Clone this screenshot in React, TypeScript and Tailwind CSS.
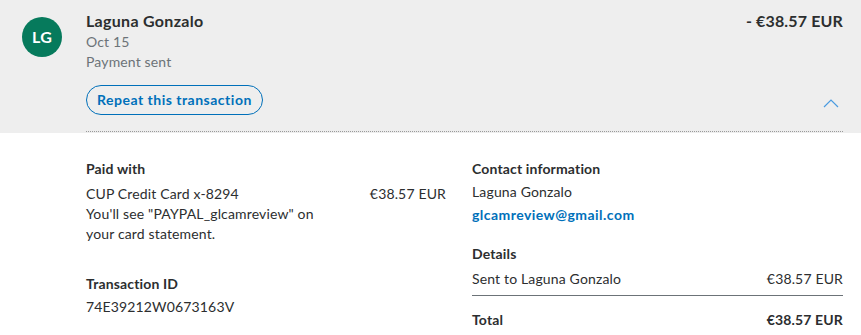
export default function App() {
  return (
    <div className="w-[861px] h-[335px] overflow-hidden bg-white text-[#2c2e2f] font-['Lato',_'Liberation_Sans',_sans-serif] tracking-[0.15px]">
      {/* Header */}
      <div className="flex bg-[#eeeeee] pb-[1px]">
        <div className="ml-[22px] mt-[17px] flex h-[40px] w-[40px] shrink-0 items-center justify-center rounded-full bg-[#067a5c] text-[16px] font-bold text-white">
          LG
        </div>
        <div className="ml-[24px] mr-[18px] flex-1 border-b border-dotted border-[#9a9a9a] pb-[16px]">
          <div className="flex justify-between">
            <div className="pt-[11px]">
              <div className="text-[16px] font-bold leading-[20px] tracking-[0.3px]">Laguna Gonzalo</div>
              <div className="mt-[1px] text-[14px] leading-[20px] text-[#6c7378]">Oct 15</div>
              <div className="text-[14px] leading-[20px] text-[#6c7378]">Payment sent</div>
            </div>
            <div className="pt-[11px] text-[16px] font-bold leading-[20px]">- €38.57 EUR</div>
          </div>
          <div className="mt-[13px] flex items-center justify-between">
            <button className="h-[30px] rounded-full border border-[#0070ba] px-[10px] text-[14px] font-bold leading-[20px] tracking-[0.5px] text-[#0070ba]">
              Repeat this transaction
            </button>
            <svg width="16" height="9" viewBox="0 0 16 9" className="mr-[4px] mt-[6px]">
              <path d="M1 8 L8 1 L15 8" fill="none" stroke="#4a9be0" strokeWidth="1.2" />
            </svg>
          </div>
        </div>
      </div>

      {/* Body */}
      <div className="flex gap-[26px] pl-[86px] pr-[18px] pt-[26px] text-[14px] leading-[20px]">
        <div className="w-[360px] shrink-0">
          <div className="font-bold">Paid with</div>
          <div className="mt-[5px] flex justify-between">
            <div className="w-[250px]">
              CUP Credit Card x-8294
              <br />
              You'll see "PAYPAL_glcamreview" on your card statement.
            </div>
            <div>€38.57 EUR</div>
          </div>
          <div className="mt-[30px] font-bold">Transaction ID</div>
          <div className="mt-[3px]">74E39212W0673163V</div>
        </div>
        <div className="flex-1">
          <div className="font-bold">Contact information</div>
          <div className="mt-[3px]">Laguna Gonzalo</div>
          <div className="mt-[3px] font-bold tracking-[0.45px] text-[#0070ba]">glcamreview@gmail.com</div>
          <div className="mt-[19px] font-bold">Details</div>
          <div className="mt-[5px] flex justify-between border-b border-[#6c7378] pb-[6px]">
            <span>Sent to Laguna Gonzalo</span>
            <span>€38.57 EUR</span>
          </div>
          <div className="mt-[14px] flex justify-between font-bold">
            <span>Total</span>
            <span>€38.57 EUR</span>
          </div>
        </div>
      </div>
    </div>
  );
}
